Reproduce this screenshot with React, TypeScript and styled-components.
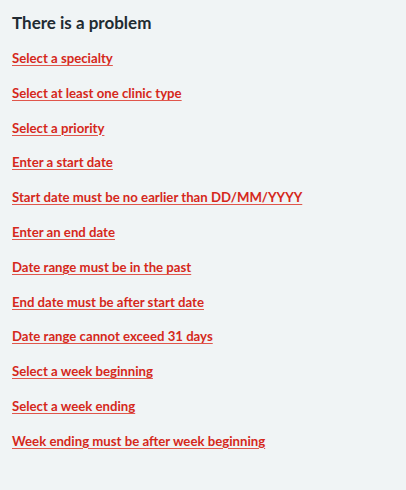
import styled, { createGlobalStyle } from "styled-components";

const GlobalStyle = createGlobalStyle`
  html, body {
    margin: 0;
    padding: 0;
    background: #f0f4f5;
  }
  body {
    font-family: Lato, "Liberation Sans", sans-serif;
  }
`;

const Summary = styled.div`
  width: 406px;
  height: 490px;
  box-sizing: border-box;
  padding: 11px 12px 0;
  background: #f0f4f5;
`;

const Title = styled.h2`
  margin: 0 0 13px;
  font-size: 17px;
  line-height: 24px;
  font-weight: 700;
  color: #212b32;
`;

const ErrorList = styled.ul`
  list-style: none;
  margin: 0;
  padding: 0;
  display: flex;
  flex-direction: column;
  gap: 14.8px;
`;

const ErrorItem = styled.li`
  font-size: 13.2px;
  line-height: 20px;
`;

const ErrorLink = styled.a`
  font-weight: 700;
  color: #d5281b;
  text-decoration: underline;
  text-decoration-color: #e0564b;
  text-decoration-thickness: 1px;
  text-underline-offset: 2px;
`;

const errors = [
  "Select a specialty",
  "Select at least one clinic type",
  "Select a priority",
  "Enter a start date",
  "Start date must be no earlier than DD/MM/YYYY",
  "Enter an end date",
  "Date range must be in the past",
  "End date must be after start date",
  "Date range cannot exceed 31 days",
  "Select a week beginning",
  "Select a week ending",
  "Week ending must be after week beginning",
];

export default function App() {
  return (
    <>
      <GlobalStyle />
      <Summary role="alert">
        <Title>There is a problem</Title>
        <ErrorList>
          {errors.map((e) => (
            <ErrorItem key={e}>
              <ErrorLink href="#">{e}</ErrorLink>
            </ErrorItem>
          ))}
        </ErrorList>
      </Summary>
    </>
  );
}
